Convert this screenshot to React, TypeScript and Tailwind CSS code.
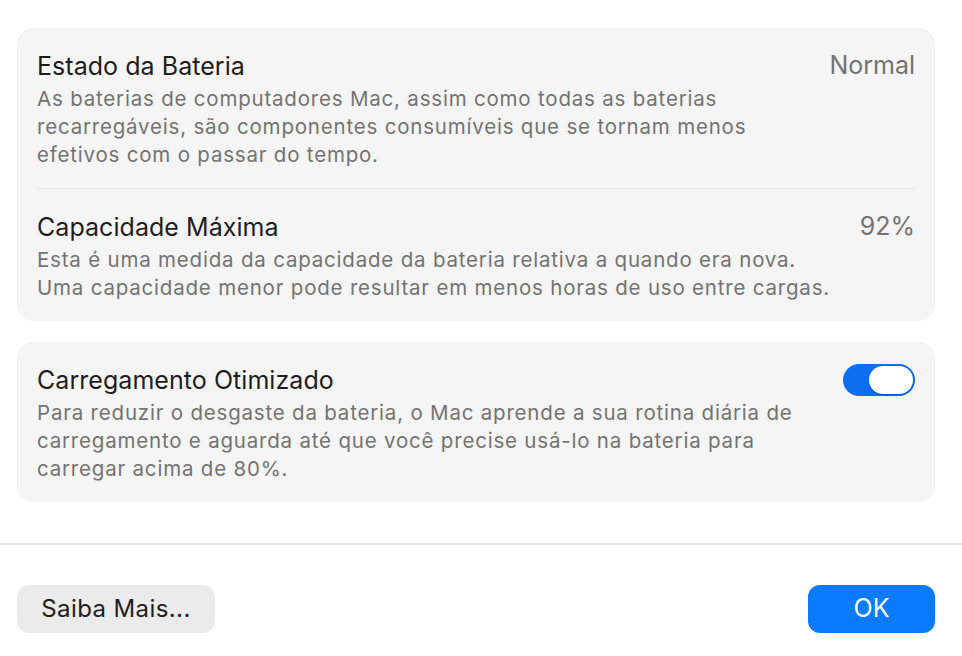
import React from "react";

const font = { fontFamily: "Inter, 'Noto Sans', 'Liberation Sans', sans-serif" };

function Row({ title, value, children }: { title: string; value?: React.ReactNode; children: React.ReactNode }) {
  return (
    <div className="flex flex-col gap-[5px]">
      <div className="flex items-center justify-between h-[28px]">
        <span className="text-[25px] leading-[28px] text-[#1d1d1f] tracking-[0.05px]">{title}</span>
        {value}
      </div>
      <p className="text-[20.5px] leading-[28px] text-[#737373] tracking-[0.8px]">{children}</p>
    </div>
  );
}

function Toggle() {
  return (
    <div className="w-[72px] h-[32px] rounded-full bg-[#0b6ff0] flex items-center justify-end pr-[2px]">
      <div className="w-[44px] h-[28px] rounded-full bg-white shadow-[0_1px_2px_rgba(0,0,0,0.25)]" />
    </div>
  );
}

export default function App() {
  return (
    <div className="w-[962px] h-[656px] bg-white flex flex-col overflow-hidden" style={font}>
      <div className="ml-[17px] mt-[28px] w-[918px] rounded-[16px] bg-[#f5f5f5] px-[20px] pt-[24px] pb-[19px]">
        <Row title="Estado da Bateria" value={<span className="text-[25px] text-[#737373]">Normal</span>}>
          As baterias de computadores Mac, assim como todas as baterias
          <br />
          recarregáveis, são componentes consumíveis que se tornam menos
          <br />
          efetivos com o passar do tempo.
        </Row>
        <div className="h-px bg-[#e3e3e3] mt-[19px] mb-[24px]" />
        <Row title="Capacidade Máxima" value={<span className="text-[25px] text-[#737373]">92%</span>}>
          Esta é uma medida da capacidade da bateria relativa a quando era nova.
          <br />
          Uma capacidade menor pode resultar em menos horas de uso entre cargas.
        </Row>
      </div>

      <div className="ml-[17px] mt-[21px] w-[918px] rounded-[16px] bg-[#f5f5f5] px-[20px] pt-[24px] pb-[19px]">
        <Row title="Carregamento Otimizado" value={<Toggle />}>
          Para reduzir o desgaste da bateria, o Mac aprende a sua rotina diária de
          <br />
          carregamento e aguarda até que você precise usá-lo na bateria para
          <br />
          carregar acima de 80%.
        </Row>
      </div>

      <div className="mt-[41px] h-[2px] bg-[#e4e4e4]" />

      <div className="flex justify-between items-center ml-[17px] w-[918px] mt-[40px]">
        <button className="w-[198px] h-[48px] rounded-[12px] bg-[#ebebeb] text-[24px] tracking-[0.4px] text-[#1e1e1e]">
          Saiba Mais...
        </button>
        <button className="w-[127px] h-[48px] rounded-[12px] bg-[#0b7bfe] text-[25px] text-white">
          OK
        </button>
      </div>
    </div>
  );
}
